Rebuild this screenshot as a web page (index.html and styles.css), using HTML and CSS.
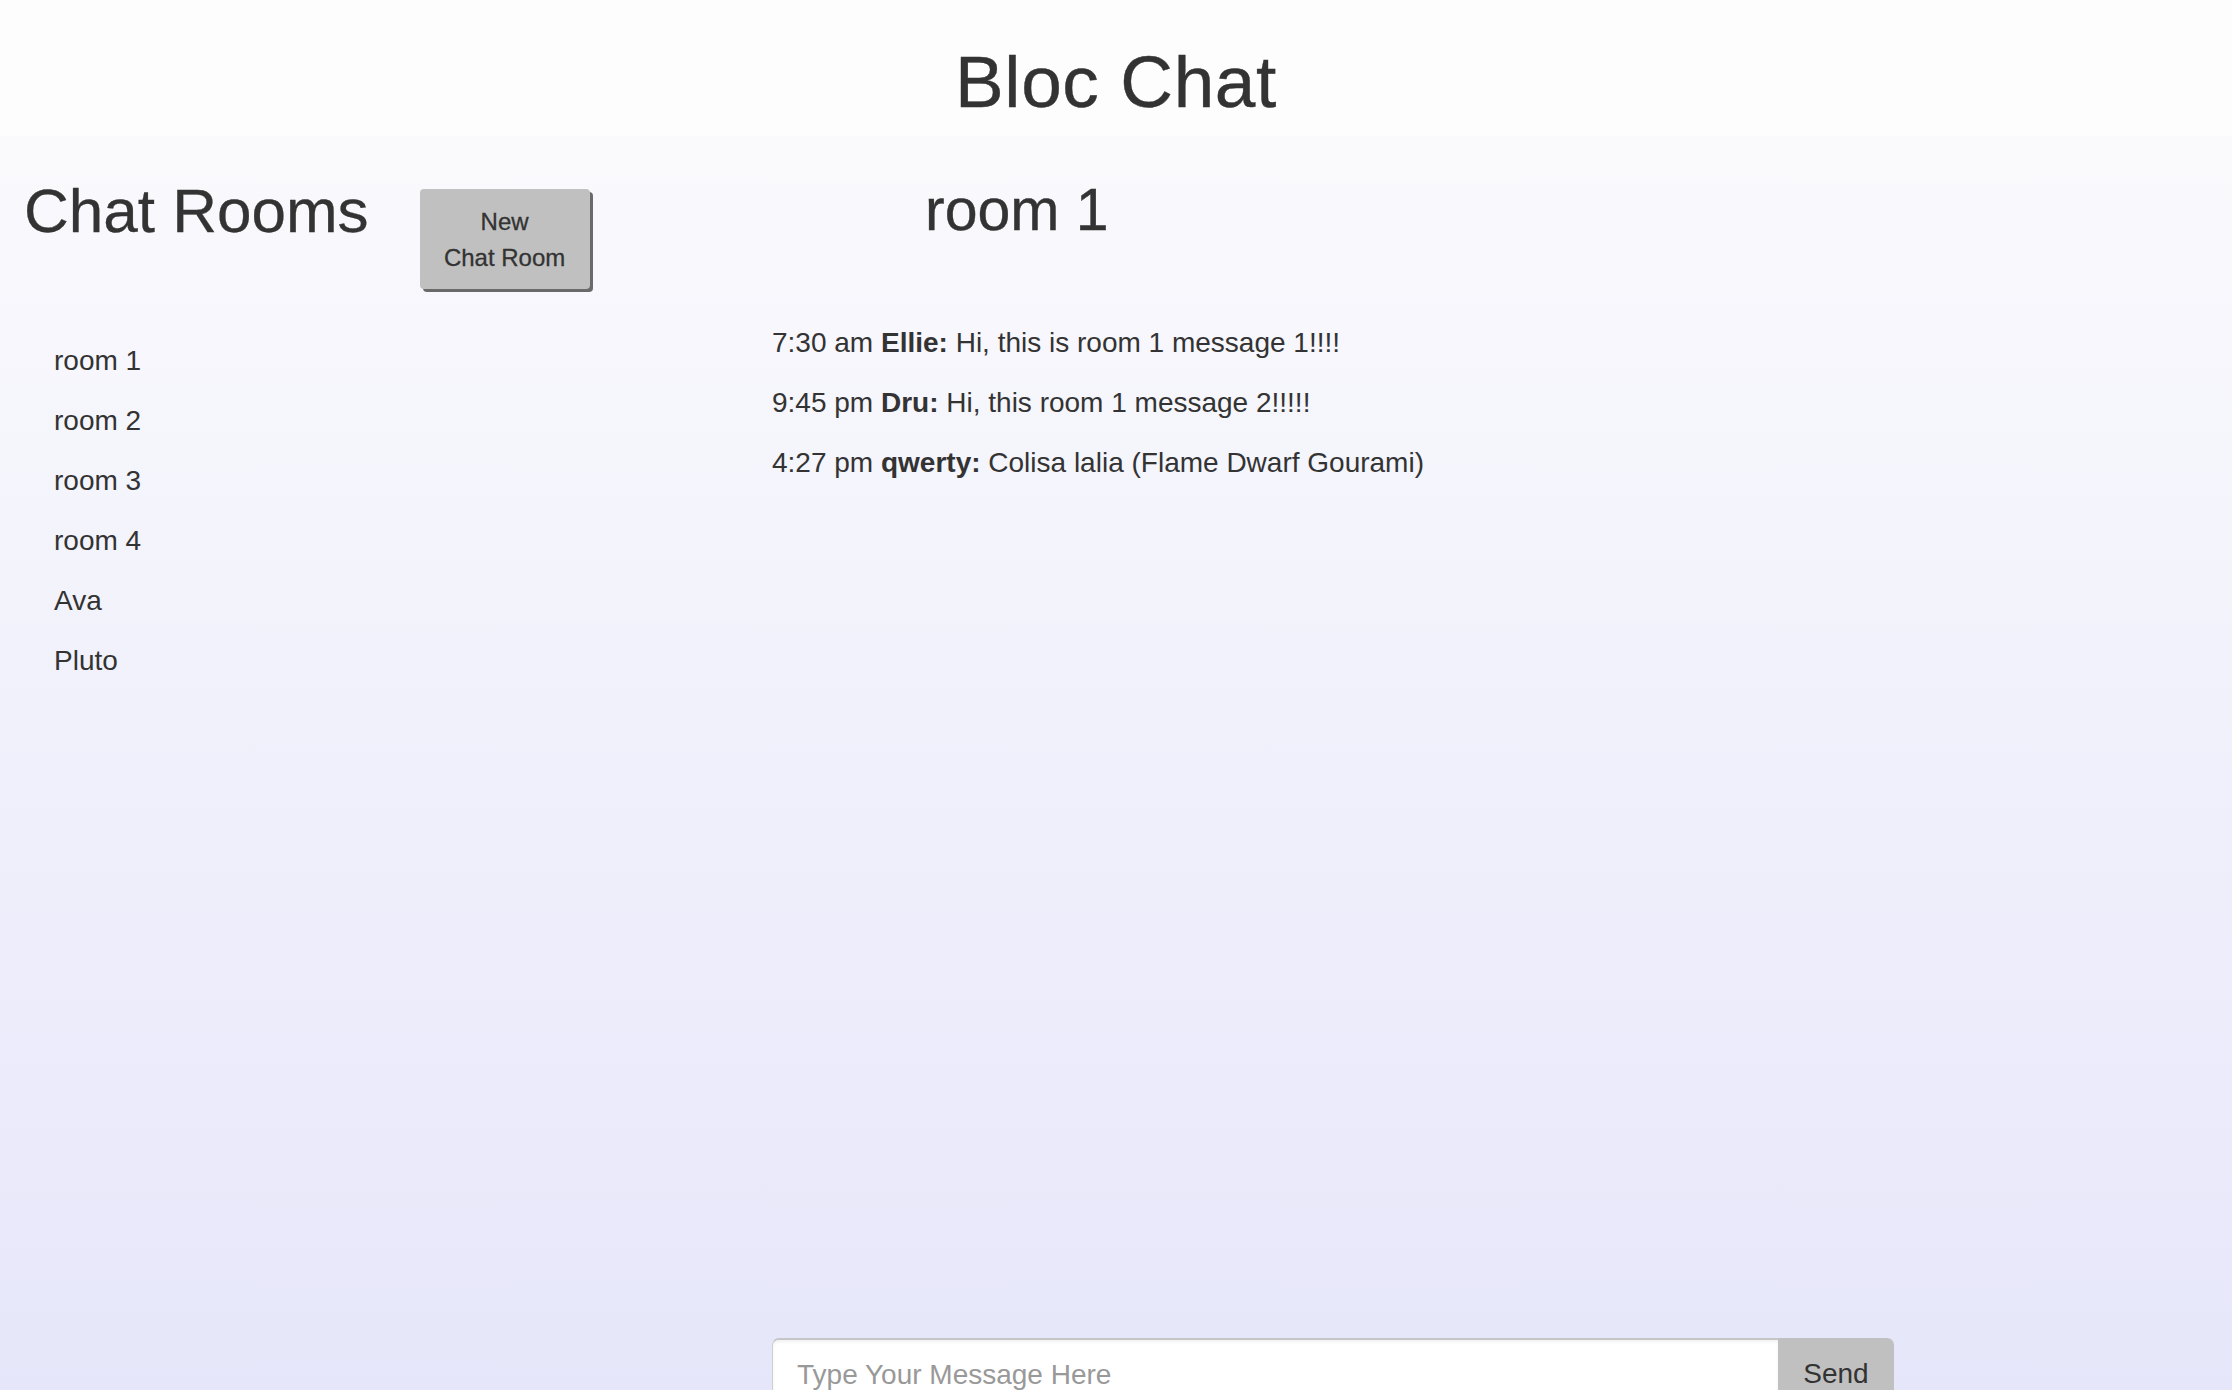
FILE: index.html
```html
<!DOCTYPE html>
<html lang="en">
<head>
<meta charset="utf-8">
<title>Bloc Chat</title>
<link rel="stylesheet" href="styles.css">
</head>
<body>
<header class="site-header">
  <h1 class="site-title">Bloc Chat</h1>
</header>
<div class="layout">
  <aside class="sidebar">
    <div class="sidebar-head">
      <h2 class="sidebar-title">Chat Rooms</h2>
      <button class="new-room-btn" type="button">New<br>Chat Room</button>
    </div>
    <ul class="room-list">
      <li class="room-item">room 1</li>
      <li class="room-item">room 2</li>
      <li class="room-item">room 3</li>
      <li class="room-item">room 4</li>
      <li class="room-item">Ava</li>
      <li class="room-item">Pluto</li>
    </ul>
  </aside>
  <main class="chat">
    <h2 class="chat-title">room 1</h2>
    <ul class="messages">
      <li class="message">7:30 am <strong>Ellie:</strong> Hi, this is room 1 message 1!!!!</li>
      <li class="message">9:45 pm <strong>Dru:</strong> Hi, this room 1 message 2!!!!!</li>
      <li class="message">4:27 pm <strong>qwerty:</strong> Colisa lalia (Flame Dwarf Gourami)</li>
    </ul>
    <form class="composer">
      <input class="composer-input" type="text" placeholder="Type Your Message Here">
      <button class="composer-send" type="button">Send</button>
    </form>
  </main>
</div>
</body>
</html>
```
FILE: styles.css
```css
html, body {
  margin: 0;
  padding: 0;
}

body {
  font-family: "Liberation Sans", Arial, Helvetica, sans-serif;
  color: #333;
  background: #e6e6fa;
}

.site-header {
  height: 136px;
  box-sizing: border-box;
  padding-top: 45px;
  background: #fdfdfd;
  text-align: center;
}

.site-title {
  margin: 0;
  font-size: 73px;
  line-height: 1;
  font-weight: normal;
  letter-spacing: 0.6px;
  -webkit-text-stroke: 0.4px #333;
}

.layout {
  display: flex;
  background: linear-gradient(to bottom, #fafafd 0%, #e6e6fa 1254px);
}

.sidebar {
  width: 772px;
  flex: none;
  box-sizing: border-box;
  padding-left: 24px;
}

.sidebar-head {
  display: flex;
  align-items: flex-start;
  gap: 51px;
}

.sidebar-title {
  margin: 44px 0 0;
  font-size: 62px;
  line-height: 1;
  font-weight: normal;
  -webkit-text-stroke: 0.3px #333;
}

.new-room-btn {
  margin-top: 53px;
  width: 170px;
  height: 100px;
  padding: 2px 0 0;
  border: none;
  border-radius: 4px;
  background: #c0c0c0;
  box-shadow: 3px 3px 0 #6a6a6a;
  color: #333;
  font-family: inherit;
  font-size: 24px;
  line-height: 36px;
  text-align: center;
  -webkit-text-stroke: 0.3px #333;
}

.room-list {
  list-style: none;
  margin: 42px 0 0;
  padding: 0 0 0 30px;
}

.room-item {
  font-size: 28px;
  line-height: 60px;
}

.chat {
  flex: none;
  width: 1122px;
  display: flex;
  flex-direction: column;
}

.chat-title {
  margin: 45px 0 0;
  padding-left: 153px;
  font-size: 59px;
  line-height: 1;
  font-weight: normal;
  -webkit-text-stroke: 0.4px #333;
}

.messages {
  list-style: none;
  margin: 73px 0 0;
  padding: 0;
  height: 1025px;
}

.message {
  font-size: 28px;
  line-height: 60px;
}

.message strong {
  font-weight: bold;
}

.composer {
  display: flex;
  margin: 0;
  height: 72px;
}

.composer-input {
  flex: 1;
  min-width: 0;
  box-sizing: border-box;
  height: 72px;
  margin: 0;
  padding: 0 24px;
  border: 1px solid #cfcfcf;
  border-top: 2px solid #c6c6c6;
  border-right: none;
  border-radius: 7px 0 0 0;
  background: #fff;
  box-shadow: inset 0 2px 3px rgba(0, 0, 0, 0.06);
  font-family: inherit;
  font-size: 28px;
  color: #333;
  outline: none;
}

.composer-input::placeholder {
  color: #999;
}

.composer-send {
  flex: none;
  width: 116px;
  height: 72px;
  margin: 0;
  padding: 0;
  border: none;
  border-radius: 0 7px 0 0;
  background: #c0c0c0;
  color: #333;
  font-family: inherit;
  font-size: 28px;
}
```
